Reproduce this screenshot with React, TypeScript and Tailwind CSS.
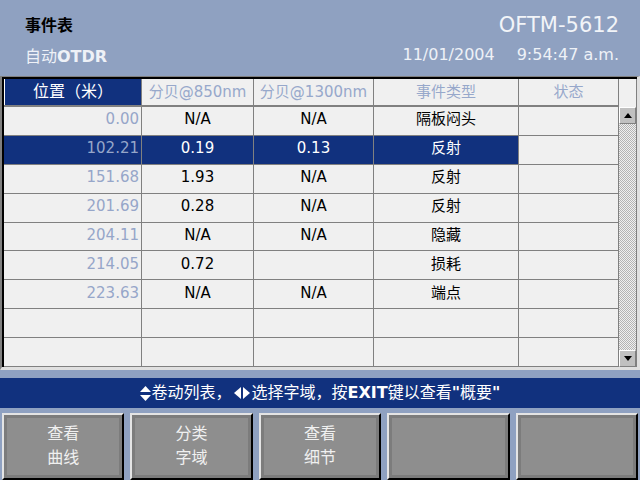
import React from "react";

const rows: string[][] = [
  ["0.00", "N/A", "N/A", "隔板闷头"],
  ["102.21", "0.19", "0.13", "反射"],
  ["151.68", "1.93", "N/A", "反射"],
  ["201.69", "0.28", "N/A", "反射"],
  ["204.11", "N/A", "N/A", "隐藏"],
  ["214.05", "0.72", "", "损耗"],
  ["223.63", "N/A", "N/A", "端点"],
  ["", "", "", ""],
  ["", "", "", ""],
];

const SELECTED = 1;

function ScrollButton({ down }: { down?: boolean }) {
  return (
    <div className="h-[17px] bg-[#c0c0c0] border-t border-l border-t-white border-l-white border-r border-b border-r-[#808080] border-b-[#808080] flex items-center justify-center">
      <svg width="8" height="5" viewBox="0 0 8 5">
        {down ? <polygon points="0,0 8,0 4,5" fill="#000" /> : <polygon points="0,5 8,5 4,0" fill="#000" />}
      </svg>
    </div>
  );
}

function SoftKey({ top, bottom }: { top?: string; bottom?: string }) {
  return (
    <div className="h-full border-t-2 border-l-2 border-t-[#e4e4e4] border-l-[#e4e4e4] border-r-2 border-b-2 border-r-black border-b-black">
      <div className="h-full border-[3px] border-[#7c7c7c] bg-[#8e8e8e] flex flex-col items-center justify-center text-[16px] leading-[24px] text-[#f0f0f0] pb-[2px]">
        <span>{top}</span>
        <span>{bottom}</span>
      </div>
    </div>
  );
}

export default function App() {
  const colW = ["w-[138px]", "w-[112px]", "w-[120px]", "w-[145px]", "w-[100px]"];
  return (
    <div className="w-[640px] h-[480px] overflow-hidden bg-[#8fa1c1] font-['DejaVu_Sans','Noto_Sans_CJK_SC',sans-serif] flex flex-col">
      {/* Header */}
      <div className="h-[76px] flex justify-between pl-[25px] pr-[21px]">
        <div className="flex flex-col">
          <div className="mt-[15px] text-[16px] leading-[22px] font-bold text-black">事件表</div>
          <div className="mt-[9px] text-[16px] leading-[22px] text-[#eef1f7]">
            自动<span className="font-bold">OTDR</span>
          </div>
        </div>
        <div className="flex flex-col items-end">
          <div className="mt-[12px] text-[21px] leading-[26px] text-[#f2f4f8]">OFTM-5612</div>
          <div className="mt-[6px] text-[16px] leading-[22px] text-[#eef1f7] flex gap-[22px]">
            <span>11/01/2004</span>
            <span>9:54:47 a.m.</span>
          </div>
        </div>
      </div>

      {/* Table */}
      <div className="h-[294px] border-t border-l-2 border-[#808080] border-r-[3px] border-b-[3px] border-r-[#e0e0e0] border-b-[#e0e0e0] bg-[#f0f0f0]">
        <div className="h-full border-t-2 border-l-2 border-black flex">
          <div className="w-[615px] flex flex-col">
            <div className="h-[28px] flex border-b-2 border-[#808080] text-[15px]">
              <div className={`${colW[0]} bg-[#11317e] text-white border-l border-white border-r border-r-[#808080] flex items-center justify-center text-[16px]`}>
                位置（米）
              </div>
              {["分贝@850nm", "分贝@1300nm", "事件类型", "状态"].map((h, i) => (
                <div
                  key={h}
                  className={`${colW[i + 1]} border-r border-[#808080] flex items-center justify-center text-[#97a8cb]`}
                >
                  {h}
                </div>
              ))}
            </div>
            {rows.map((r, ri) => {
              const sel = ri === SELECTED;
              return (
                <div key={ri} className="h-[29px] flex border-b border-[#808080] text-[15px]">
                  <div
                    className={`${colW[0]} border-r border-[#808080] flex items-center justify-end pr-[2px] pb-[3px] text-[#96a6c9] ${sel ? "bg-[#11317e]" : ""}`}
                  >
                    {r[0]}
                  </div>
                  {r.slice(1).map((c, ci) => (
                    <div
                      key={ci}
                      className={`${colW[ci + 1]} border-r border-[#808080] flex items-center justify-center pb-[3px] ${sel ? "bg-[#11317e] text-white" : "text-black"}`}
                    >
                      {c}
                    </div>
                  ))}
                  <div className={`${colW[4]} border-r border-[#808080]`} />
                </div>
              );
            })}
          </div>
          {/* Scrollbar */}
          <div className="w-[18px] border-r border-[#808080] flex flex-col">
            <div className="h-[28px]" />
            <ScrollButton />
            <div className="flex-1 bg-[repeating-conic-gradient(#b4b4b4_0%_25%,#f0f0f0_0%_50%)] bg-[length:2px_2px]" />
            <ScrollButton down />
          </div>
        </div>
      </div>

      {/* Status bar */}
      <div className="mt-[8px] h-[30px] bg-[#11317e] text-white text-[16px] flex items-center justify-center">
        <svg width="11" height="15" viewBox="0 0 11 15" className="mr-[1px]">
          <polygon points="0,6 11,6 5.5,0" fill="#fff" />
          <polygon points="0,9 11,9 5.5,15" fill="#fff" />
        </svg>
        <span>卷动列表，</span>
        <svg width="16" height="12" viewBox="0 0 16 12" className="mx-[2px]">
          <polygon points="7,0 7,12 0,6" fill="#fff" />
          <polygon points="9,0 9,12 16,6" fill="#fff" />
        </svg>
        <span>
          选择字域，按<span className="font-bold">EXIT</span>键以查看<span className="font-bold">"</span>概要<span className="font-bold">"</span>
        </span>
      </div>

      {/* Soft keys */}
      <div className="mt-[5px] flex-1 grid grid-cols-5 gap-[6px] px-[2px]">
        <SoftKey top="查看" bottom="曲线" />
        <SoftKey top="分类" bottom="字域" />
        <SoftKey top="查看" bottom="细节" />
        <SoftKey />
        <SoftKey />
      </div>
    </div>
  );
}
